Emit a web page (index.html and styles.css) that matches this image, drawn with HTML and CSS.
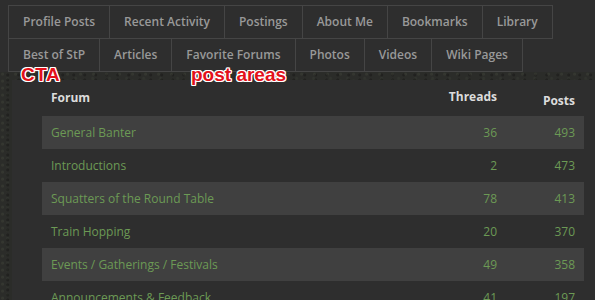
FILE: index.html
```html
<!DOCTYPE html>
<html>
<head>
<meta charset="utf-8">
<link rel="stylesheet" href="styles.css">
</head>
<body>
<div class="page">
  <nav class="tabs">
    <div class="tab-row">
      <a class="tab">Profile Posts</a>
      <a class="tab">Recent Activity</a>
      <a class="tab">Postings</a>
      <a class="tab">About Me</a>
      <a class="tab">Bookmarks</a>
      <a class="tab">Library</a>
    </div>
    <div class="tab-row second">
      <a class="tab">Best of StP</a>
      <a class="tab">Articles</a>
      <a class="tab">Favorite Forums</a>
      <a class="tab">Photos</a>
      <a class="tab">Videos</a>
      <a class="tab">Wiki Pages</a>
    </div>
  </nav>
  <div class="content">
    <span class="note note-cta">CTA</span>
    <span class="note note-post">post areas</span>
    <div class="panel">
      <div class="table">
        <div class="row head">
          <div class="cell name h-forum">Forum</div>
          <div class="cell num h-threads">Threads</div>
          <div class="cell num h-posts">Posts</div>
        </div>
        <div class="row alt">
          <div class="cell name">General Banter</div>
          <div class="cell num">36</div>
          <div class="cell num">493</div>
        </div>
        <div class="row">
          <div class="cell name">Introductions</div>
          <div class="cell num">2</div>
          <div class="cell num">473</div>
        </div>
        <div class="row alt">
          <div class="cell name">Squatters of the Round Table</div>
          <div class="cell num">78</div>
          <div class="cell num">413</div>
        </div>
        <div class="row">
          <div class="cell name">Train Hopping</div>
          <div class="cell num">20</div>
          <div class="cell num">370</div>
        </div>
        <div class="row alt">
          <div class="cell name">Events / Gatherings / Festivals</div>
          <div class="cell num">49</div>
          <div class="cell num">358</div>
        </div>
        <div class="row">
          <div class="cell name">Announcements &amp; Feedback</div>
          <div class="cell num">41</div>
          <div class="cell num">197</div>
        </div>
      </div>
    </div>
  </div>
</div>
</body>
</html>
```

FILE: styles.css
```css
html, body {
  margin: 0;
  padding: 0;
}
body {
  background: #2e2e2e;
  font-family: "Open Sans", "Liberation Sans", sans-serif;
}
.page {
  width: 595px;
  height: 300px;
  overflow: hidden;
}
.tabs {
  padding: 5px 0 0 8px;
  background: #2e2e2e;
}
.tab-row {
  display: flex;
}
.tab-row.second {
  margin-top: -1px;
}
.tab {
  display: block;
  border: 1px solid #454545;
  margin-left: -1px;
  padding: 0 14px;
  height: 32px;
  line-height: 32px;
  font-size: 12px;
  font-weight: 600;
  color: #999999;
  white-space: nowrap;
}
.tab:first-child {
  margin-left: 0;
}
.content {
  position: relative;
  box-sizing: border-box;
  padding-top: 8px;
  padding-left: 12px;
  height: 240px;
  background-color: #2b2c29;
  background-image:
    radial-gradient(circle at 20% 30%, rgba(70,74,62,0.35) 0 1px, transparent 2px),
    radial-gradient(circle at 70% 60%, rgba(18,18,16,0.4) 0 1px, transparent 2px),
    radial-gradient(circle at 45% 80%, rgba(62,66,55,0.3) 0 1px, transparent 2px);
  background-size: 13px 7px, 11px 5px, 17px 8px;
}
.panel {
  background: #2e2e2e;
  padding: 0 11px 0 30px;
  height: 100%;
}
.table {
  width: 542px;
}
.row {
  display: grid;
  grid-template-columns: 1fr 90px 78px;
  height: 33px;
  align-items: center;
}
.row.alt {
  background: #404040;
}
.cell {
  font-size: 12px;
  color: #6c9a55;
  padding: 0 9px;
}
.num {
  text-align: right;
}
.row.head {
  height: 36px;
  align-items: start;
}
.head .cell {
  color: #dcdcdc;
  font-weight: 700;
}
.h-forum { padding-top: 9px; }
.h-threads { padding-top: 8px; }
.h-posts { padding-top: 12px; }
.note {
  position: absolute;
  top: -7px;
  font-family: "Liberation Sans", Arial, sans-serif;
  font-weight: 700;
  color: #e3111a;
  text-shadow: -1px -1px 0 #fff, 1px -1px 0 #fff, -1px 1px 0 #fff, 1px 1px 0 #fff, 0 1px 0 #fff, 0 -1px 0 #fff, 1px 0 0 #fff, -1px 0 0 #fff;
  z-index: 2;
  line-height: 1;
}
.note-cta {
  left: 21px;
  font-size: 19px;
  letter-spacing: 0.5px;
}
.note-post {
  left: 191px;
  font-size: 19px;
}
```
